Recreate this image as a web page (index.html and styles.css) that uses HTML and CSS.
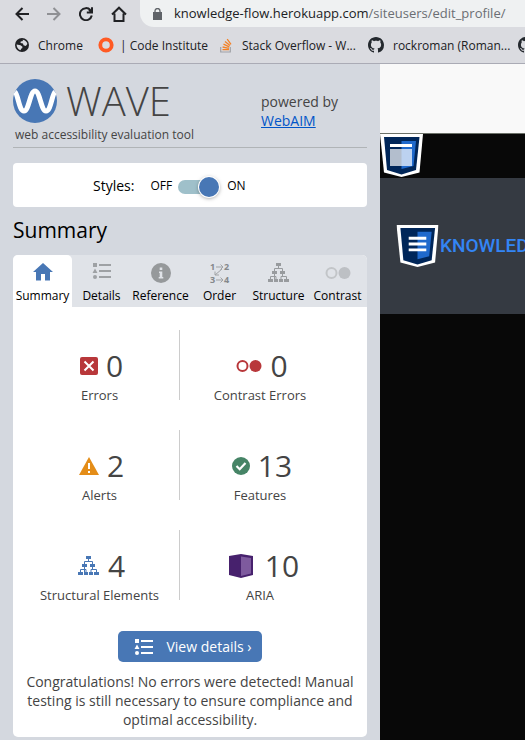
FILE: index.html
```html
<!DOCTYPE html>
<html lang="en">
<head>
<meta charset="utf-8">
<title>WAVE accessibility report</title>
<link rel="stylesheet" href="styles.css">
</head>
<body>
<svg class="defs" width="0" height="0" aria-hidden="true">
  <symbol id="github" viewBox="0 0 16 16"><path d="M8 0C3.58 0 0 3.58 0 8c0 3.54 2.29 6.53 5.47 7.59.4.07.55-.17.55-.38 0-.19-.01-.82-.01-1.49-2.01.37-2.53-.49-2.69-.94-.09-.23-.48-.94-.82-1.13-.28-.15-.68-.52-.01-.53.63-.01 1.08.58 1.23.82.72 1.21 1.87.87 2.33.66.07-.52.28-.87.51-1.07-1.78-.2-3.64-.89-3.64-3.95 0-.87.31-1.59.82-2.15-.08-.2-.36-1.02.08-2.12 0 0 .67-.21 2.2.82.64-.18 1.32-.27 2-.27s1.36.09 2 .27c1.53-1.04 2.2-.82 2.2-.82.44 1.1.16 1.92.08 2.12.51.56.82 1.27.82 2.15 0 3.07-1.87 3.75-3.65 3.95.29.25.54.73.54 1.48 0 1.07-.01 1.93-.01 2.2 0 .21.15.46.55.38A8.01 8.01 0 0 0 16 8c0-4.42-3.58-8-8-8z"/></symbol>
  <symbol id="list" viewBox="0 0 20 16"><path d="M1 0h4v4H1zM3 5.500L5.500 10H.5zM7 1h12v2H7zM7 7h12v2H7zM7 13h12v2H7z"/><circle cx="3" cy="14" r="2"/></symbol>
  <symbol id="tree" viewBox="0 0 22 20"><path d="M8 0h5v3H8zM4 8h5v3H4zM12 8h5v3h-5zM0 16h5v3H0zM6 16h4v3H6zM11 16h4v3h-4zM16 16h5v3h-5z"/><path d="M10.500 3v3M6.500 8V5.500h8V8M6.500 11v5M14.500 11v2.500M2.500 16v-2.500H8V16M13 16v-2.500h5.500V16" fill="none" stroke="currentColor"/></symbol>
  <symbol id="shield" viewBox="0 0 43 43"><path fill="#fff" d="M0 0h43l-3.500 38.500L21.500 43 4 38.500z"/><path fill="#002659" d="M4 3h35.500l-3.500 33-14.500 4.500L7 36z"/><path fill="#1f69cc" d="M21.500 7H36l-2.500 25-12 3z"/></symbol>
</svg>

<header class="browser">
  <div class="toolbar">
    <button class="nav" aria-label="Back"><svg width="14" height="14" viewBox="0 0 14 14"><path d="M14 7H1.500M7.500 1l-6 6 6 6"/></svg></button>
    <button class="nav nav-off" aria-label="Forward"><svg width="14" height="14" viewBox="0 0 14 14"><path d="M0 7h12.500M6.500 1l6 6-6 6"/></svg></button>
    <button class="nav" aria-label="Reload"><svg width="14" height="14" viewBox="0 0 14 14"><path d="M11.500 3.200A6 6 0 1 0 12.800 8.500M13 .3v5.200H7.800M12.500 5L10 2.500"/></svg></button>
    <button class="nav" aria-label="Home"><svg width="16" height="16" viewBox="0 0 16 16"><path d="M1 8.500L8 1.700l7 6.800M3.500 7.500V15h9V7.500"/></svg></button>
    <div class="address">
      <svg width="9" height="12" viewBox="0 0 9 12"><path d="M0 4h9v8H0z" fill="#5f6368"/><path d="M2 4.500V3a2.500 2.500 0 0 1 5 0v1.500" fill="none" stroke="#5f6368" stroke-width="1.300"/></svg>
      <span class="url">knowledge-flow.herokuapp.com<span class="path">/siteusers/edit_profile/</span></span>
    </div>
  </div>
  <nav class="bookmarks" aria-label="Bookmarks">
    <a class="mark mark-chrome" href="#"><svg width="14" height="14" viewBox="0 0 14 14"><circle cx="7" cy="7" r="7" fill="#202124"/><path fill="#dadbe0" d="M7.500 1.700C9.500 1.700 12 3.500 12.400 6L10.800 8 8.500 7.300 8 5.500 5.500 5l.2-1.600L8 3zM1.600 6.500l3.900.8 2 1.500-.3 1.500-1.200.5-.3 1.500C3 11.500 1.500 9 1.600 6.500z"/></svg>Chrome</a>
    <a class="mark mark-ci" href="#"><svg width="16" height="16" viewBox="0 0 16 16"><circle cx="8" cy="8" r="5.700" fill="none" stroke="#ff5a24" stroke-width="3.800"/></svg>| Code Institute</a>
    <a class="mark mark-so" href="#"><svg width="12" height="15" viewBox="0 0 12 15"><path d="M.7 9v5h9.600V9" fill="none" stroke="#a0a2a7" stroke-width="1.200"/><path d="M2.500 11.700H9M2.600 9l6.300 1.300M3.500 6.200l5.800 2.700M5 3.500l5 4M7.200 1.200L11 6.300" stroke="#f48024" stroke-width="1.300"/></svg>Stack Overflow - W...</a>
    <a class="mark mark-gh" href="#"><svg width="16" height="16" fill="#24292e"><use href="#github"/></svg>rockroman (Roman...</a>
    <a class="mark" href="#" aria-label="GitHub"><svg width="16" height="16" fill="#24292e"><use href="#github"/></svg></a>
  </nav>
</header>

<div class="workspace">
  <aside class="sidebar">
    <header class="brand">
      <div>
        <div class="logo">
          <svg width="44" height="44" viewBox="0 0 44 44"><circle cx="22" cy="22" r="22" fill="#4877b5"/><path d="M2 13C5 15 6 32 11 32s6-20 11-20 6 20 11 20 6-17 9-19" fill="none" stroke="#fff" stroke-width="5"/></svg>
          <span class="wordmark">WAVE</span>
        </div>
        <div class="tagline">web accessibility evaluation tool</div>
      </div>
      <div class="powered">powered by<br><a href="#">WebAIM</a></div>
    </header>

    <div class="styles-card">
      <label class="styles-label" for="styles">Styles:</label>
      <span>OFF</span>
      <input class="switch" type="checkbox" role="switch" id="styles" checked>
      <span>ON</span>
    </div>

    <h1>Summary</h1>

    <section class="panel">
      <div class="tabs" role="tablist">
        <button class="tab tab-on" role="tab" aria-selected="true"><span class="tab-icon"><svg width="20" height="20" viewBox="0 0 20 20"><path fill="#4877b5" d="M10 0l10 9h-3v8.500h-5V11H8v6.500H3V9H0z"/></svg></span>Summary</button>
        <button class="tab" role="tab"><span class="tab-icon"><svg width="20" height="20" fill="#9ea1a4"><use href="#list" width="20" height="16"/></svg></span>Details</button>
        <button class="tab" role="tab"><span class="tab-icon"><svg width="20" height="20" viewBox="0 0 20 20"><circle cx="10" cy="10" r="10" fill="#96999b"/><path fill="#e0e3e8" d="M8.700 4.500h2.600V7H8.700zM8 8.500h3.300V14h1v1.500H7.700V14h1v-4H8z"/></svg></span>Reference</button>
        <button class="tab" role="tab"><span class="tab-icon"><svg class="order" width="20" height="20" viewBox="0 0 20 20"><text x="0" y="7">1</text><text x="14" y="7">2</text><text x="0" y="20">3</text><text x="14" y="20">4</text><path d="M6 4h7M10.500 1.500L13 4l-2.500 2.500M6 17h7M10.500 14.500L13 17l-2.500 2.500M12 6l-7 6M5 8.500V12h4" fill="none" stroke="#a0a3a6"/></svg></span>Order</button>
        <button class="tab" role="tab"><span class="tab-icon"><svg class="gray" width="22" height="20"><use href="#tree"/></svg></span>Structure</button>
        <button class="tab" role="tab"><span class="tab-icon"><svg width="26" height="12" viewBox="0 0 26 12"><circle cx="6.500" cy="6" r="5" fill="none" stroke="#c2c5c8" stroke-width="2"/><circle cx="19.500" cy="6" r="6" fill="#bdc0c4"/></svg></span>Contrast</button>
      </div>

      <div class="stats">
        <div class="stat">
          <div class="count"><svg width="18" height="18" viewBox="0 0 18 18"><rect width="18" height="18" rx="2" fill="#b8373a"/><path d="M4.500 4.500l9 9M13.500 4.500l-9 9" stroke="#fff" stroke-width="2"/></svg>0</div>
          <div class="name">Errors</div>
        </div>
        <div class="stat">
          <div class="count"><svg width="26" height="12" viewBox="0 0 26 12"><circle cx="6.500" cy="6" r="5" fill="none" stroke="#b8373a" stroke-width="2"/><circle cx="19.500" cy="6" r="6" fill="#b8373a"/></svg>0</div>
          <div class="name">Contrast Errors</div>
        </div>
        <div class="stat">
          <div class="count"><svg width="20" height="18" viewBox="0 0 20 18"><path d="M10 0l10 18H0z" fill="#e48d18"/><path d="M9 6h2v6H9zM9 14h2v2H9z" fill="#fff"/></svg>2</div>
          <div class="name">Alerts</div>
        </div>
        <div class="stat">
          <div class="count"><svg width="18" height="18" viewBox="0 0 18 18"><circle cx="9" cy="9" r="9" fill="#468466"/><path d="M4.500 9l3.200 3.200L13.500 6" fill="none" stroke="#fff" stroke-width="2.200"/></svg>13</div>
          <div class="name">Features</div>
        </div>
        <div class="stat">
          <div class="count"><svg class="blue" width="22" height="20"><use href="#tree"/></svg>4</div>
          <div class="name">Structural Elements</div>
        </div>
        <div class="stat">
          <div class="count count-wide"><svg width="24" height="24" viewBox="0 0 24 24"><path d="M0 2L12 0l12 2v19l-12 3-12-3z" fill="#47216d"/><path d="M12 2.500l10 1.500v15.500L12 22z" fill="#7e5a9e"/></svg>10</div>
          <div class="name">ARIA</div>
        </div>
      </div>

      <button class="details"><svg width="20" height="16" fill="#fff"><use href="#list"/></svg>View details ›</button>
      <p class="message">Congratulations! No errors were detected! Manual testing is still necessary to ensure compliance and optimal accessibility.</p>
    </section>
  </aside>

  <main class="page">
    <div class="page-top"></div>
    <div class="page-nav"><svg width="43" height="43" viewBox="0 0 43 43"><use href="#shield"/><path fill="#fff" d="M10 10h22v3H10z"/><path fill="#fff" fill-opacity=".7" d="M10 15h22v17H10z"/></svg></div>
    <div class="page-hero"><svg width="43" height="42" viewBox="0 0 43 43"><use href="#shield"/><path fill="#fff" d="M12.500 12h18v3h-18zM12.500 18h18v3h-18zM12.500 24h18v3h-18z"/></svg><span>KNOWLEDGE</span></div>
  </main>
</div>
</body>
</html>
```

FILE: styles.css
```css
* { box-sizing: border-box; }

body {
  margin: 0;
  min-height: 100vh;
  display: flex;
  flex-direction: column;
  overflow: hidden;
  font: 14px/19px "Open Sans", "Noto Sans", sans-serif;
  color: #000;
  background: #080808;
}

svg { display: block; flex: none; }
.defs { position: absolute; }

button {
  margin: 0;
  padding: 0;
  border: 0;
  background: none;
  font: inherit;
  color: inherit;
}

.browser {
  background: #dadbe0;
  border-bottom: 1px solid #aaabb5;
  color: #202124;
}

.toolbar { display: flex; align-items: center; height: 27px; padding-left: 14px; }

.nav { width: 32px; display: flex; padding-left: 1px; }
.nav svg { fill: none; stroke: #202124; stroke-width: 2; }
.nav-off svg { stroke: #8f9094; }

.address {
  flex: 1;
  min-width: 0;
  display: flex;
  align-items: center;
  gap: 12px;
  height: 27px;
  margin-left: -2px;
  padding-left: 13px;
  border-radius: 0 0 0 14px;
  background: #eff1f2;
  white-space: nowrap;
}
.url { font-size: 13px; }
.path { color: #6b6e73; }

.bookmarks {
  display: flex;
  align-items: center;
  height: 36px;
  padding-left: 15px;
  font-size: 12px;
  white-space: nowrap;
}
.mark {
  display: flex;
  flex: none;
  align-items: center;
  gap: 9px;
  color: inherit;
  text-decoration: none;
}
.mark-chrome { width: 83px; }
.mark-ci { width: 122px; gap: 6px; }
.mark-so { width: 148px; gap: 10px; }
.mark-gh { width: 150px; }

.workspace { flex: 1; display: flex; }

.sidebar {
  flex: 0 0 380px;
  padding: 15px 13px 3px;
  background: #d4d8df;
}

.brand {
  display: flex;
  height: 69px;
  border-bottom: 1px solid #b0b4b7;
  color: #444;
}
.brand > :first-child { width: 248px; }
.logo { display: flex; gap: 9px; height: 44px; align-items: center; }
.wordmark { font-size: 40px; font-weight: 300; line-height: 44px; }
.tagline { padding: 2px 0 0 2px; font-size: 12px; line-height: 20px; }
.powered { padding-top: 13px; }
.powered a { color: #0055c8; }

.styles-card {
  display: flex;
  align-items: center;
  height: 44px;
  margin-top: 15px;
  padding-left: 80px;
  border-radius: 4px;
  background: #fff;
  font-size: 12px;
}
.styles-label { margin-right: 16px; font-size: 14px; }

.switch {
  appearance: none;
  display: flex;
  align-items: center;
  justify-content: flex-end;
  width: 41px;
  height: 14px;
  margin: 3px 8px 0 6px;
  border-radius: 7px;
  background: #9fc0ca;
}
.switch::before {
  content: "";
  width: 20px;
  height: 20px;
  border-radius: 50%;
  background: #4877b5;
  box-shadow: 0 0 0 1px #fff, 0 1px 4px rgba(0, 0, 0, .5);
}

h1 {
  margin: 8px 0 10px;
  font-size: 21px;
  font-weight: 400;
  line-height: 30px;
}

.panel { border-radius: 5px; background: #fff; color: #444; }

.tabs {
  display: grid;
  grid-template-columns: repeat(6, 1fr);
  border-radius: 5px 5px 0 0;
  background: #e0e3e8;
}
.tab {
  height: 52px;
  display: flex;
  flex-direction: column;
  align-items: center;
  border-radius: 5px 5px 0 0;
  font-size: 12px;
  line-height: 18px;
  color: #000;
  white-space: nowrap;
}
.tab-on { background: #fff; }
.tab-icon { display: flex; align-items: center; height: 32px; padding-top: 3px; }
.order { overflow: visible; }
.order text { font-size: 9px; font-weight: 700; fill: #85888b; }
.gray { color: #989b9e; fill: #989b9e; }
.blue { color: #4877b5; fill: #4877b5; }

.stats {
  display: grid;
  grid-template-columns: 1fr 1fr;
  row-gap: 30px;
  padding: 23px 27px 31px 7px;
}
.stat { min-height: 70px; padding-top: 18px; text-align: center; }
.stat:nth-child(odd) { border-right: 1px solid #ccc; }
.count {
  display: flex;
  align-items: center;
  justify-content: center;
  gap: 8px;
  padding-left: 4px;
  font-size: 30px;
  line-height: 36px;
}
.count-wide { gap: 12px; padding-left: 8px; }
.name { margin: 2px 0 -4px; font-size: 13px; line-height: 18px; }

.details {
  display: flex;
  align-items: center;
  gap: 12px;
  height: 31px;
  margin: 0 auto;
  padding: 0 10px 0 16px;
  border-radius: 5px;
  background: #4877b5;
  color: #fff;
}

.message { margin: 0; padding: 10px 12px 8px; text-align: center; }

.page { flex: 1; min-width: 0; overflow: hidden; background: #080808; }
.page-top { height: 70px; background: #f9f9f9; border-bottom: 1px solid #6b7068; }
.page-nav { height: 44px; }
.page-hero {
  display: flex;
  align-items: center;
  gap: 1px;
  height: 136px;
  padding-left: 16px;
  background: #353a42;
  font: 500 19px/24px Roboto, sans-serif;
  color: #3385f5;
}
```
